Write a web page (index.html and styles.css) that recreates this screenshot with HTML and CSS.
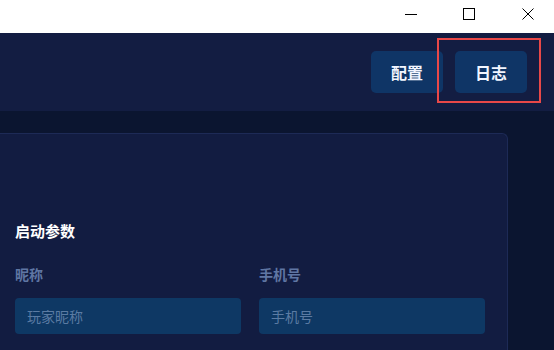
FILE: index.html
```html
<!DOCTYPE html>
<html lang="zh-CN">
<head>
<meta charset="utf-8">
<link rel="stylesheet" href="styles.css">
</head>
<body>
<div class="titlebar">
  <svg class="cap cap-min" width="12" height="12" viewBox="0 0 12 12"><path d="M0 6.5H12" stroke="#000" stroke-width="1"/></svg>
  <svg class="cap cap-max" width="12" height="12" viewBox="0 0 12 12"><rect x="0.5" y="0.5" width="11" height="11" fill="none" stroke="#000" stroke-width="1"/></svg>
  <svg class="cap cap-close" width="12" height="12" viewBox="0 0 12 12"><path d="M0.5 0.5L11.5 11.5M11.5 0.5L0.5 11.5" stroke="#000" stroke-width="1"/></svg>
</div>
<header class="header">
  <button class="hbtn">配置</button>
  <div class="hl-wrap">
    <button class="hbtn">日志</button>
    <div class="highlight"></div>
  </div>
</header>
<main class="main">
  <section class="card">
    <h2 class="card-title">启动参数</h2>
    <div class="fields">
      <div class="field">
        <label class="label">昵称</label>
        <div class="input">玩家昵称</div>
      </div>
      <div class="field">
        <label class="label">手机号</label>
        <div class="input">手机号</div>
      </div>
    </div>
  </section>
</main>
</body>
</html>
```
FILE: styles.css
```css
* { box-sizing: border-box; }
html, body { margin: 0; padding: 0; }
body {
  width: 554px;
  height: 350px;
  overflow: hidden;
  background: #0b1530;
  font-family: "Noto Sans CJK SC", "Noto Sans", sans-serif;
}
.titlebar {
  height: 33px;
  background: #ffffff;
  display: flex;
  justify-content: flex-end;
  align-items: flex-start;
  padding-right: 20px;
  padding-top: 8px;
}
.cap { display: block; }
.cap-min { margin-right: 46px; }
.cap-max { margin-right: 47px; }
.header {
  height: 78px;
  background: #131d42;
  display: flex;
  justify-content: flex-end;
  align-items: center;
  padding-right: 27px;
  gap: 12px;
}
.hbtn {
  width: 72px;
  height: 42px;
  border: none;
  border-radius: 5px;
  background: #0f3566;
  color: #f2f6ff;
  font-family: "Noto Sans CJK SC", sans-serif;
  font-weight: 700;
  font-size: 16px;
  padding: 0;
  display: block;
}
.hl-wrap { position: relative; }
.highlight {
  position: absolute;
  left: -18px;
  top: -13px;
  width: 104px;
  height: 65px;
  border: 2px solid #e94848;
}
.main {
  padding: 22px 46px 0 0;
}
.card {
  background: #121c41;
  border: 1px solid #1d2a56;
  border-left: none;
  border-bottom: none;
  border-radius: 0 6px 0 0;
  padding: 87px 22px 0 15px;
  height: 217px;
}
.card-title {
  margin: 0;
  color: #ffffff;
  font-size: 15px;
  font-weight: 700;
  line-height: 20px;
}
.fields {
  display: grid;
  grid-template-columns: 226px 226px;
  column-gap: 18px;
  margin-top: 23px;
}
.label {
  display: block;
  color: #5f76a3;
  font-size: 14px;
  font-weight: 700;
  line-height: 20px;
}
.input {
  margin-top: 14px;
  height: 36px;
  background: #0e3864;
  border-radius: 4px;
  padding-left: 12px;
  color: #5b7ba3;
  font-size: 14px;
  line-height: 36px;
}
```
